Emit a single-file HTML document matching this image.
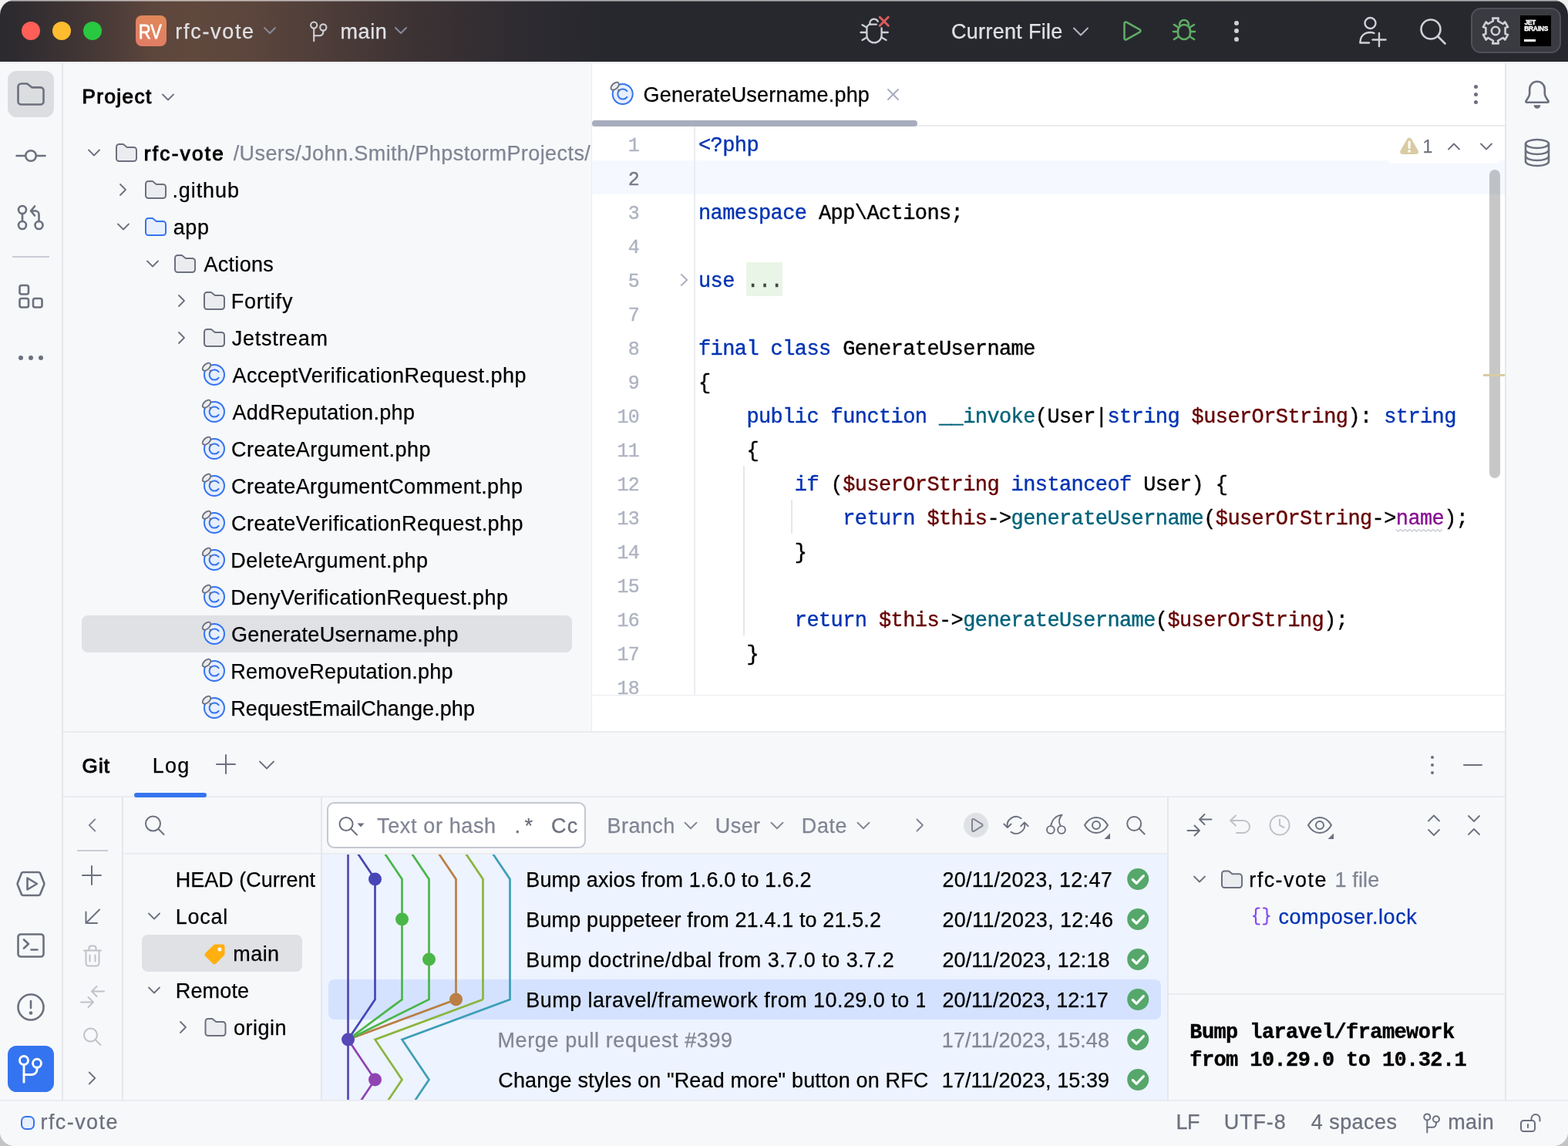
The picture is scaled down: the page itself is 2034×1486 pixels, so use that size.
<!DOCTYPE html>
<html lang="en"><head><meta charset="utf-8"><title>rfc-vote – GenerateUsername.php</title>
<style>
*{margin:0;padding:0;box-sizing:border-box}
html,body{width:2034px;height:1486px;background:#dadada}
body{background:linear-gradient(180deg,#f0f0f0,#c4c4c4)}
body{position:relative;font-family:"Liberation Sans",sans-serif}
#w{position:absolute;left:0;top:0;width:2034px;height:1486px;overflow:hidden;border-radius:19px;background:#f7f8fa;will-change:transform}
#w div,#w svg,#w span{position:absolute}
#w svg{overflow:visible}
#w span{white-space:pre;line-height:1}
.s{font-family:"Liberation Sans",sans-serif;-webkit-text-stroke:.25px currentColor}
.b{font-family:"Liberation Sans",sans-serif;font-weight:700}
.sb{font-family:"Liberation Sans",sans-serif;-webkit-text-stroke:1.05px currentColor}
.m{font-family:"Liberation Mono",monospace;-webkit-text-stroke:.4px currentColor}
</style></head>
<body><div id="w">
<div style="left:0px;top:80px;width:2034px;height:1406px;background:#f7f8fa;"></div>
<div style="left:768px;top:80px;width:1184px;height:869px;background:#ffffff;"></div>
<div style="left:0px;top:0px;width:2034px;height:80px;background:#27282e;background:linear-gradient(90deg,#2b2a2f 0px,#302c30 30px,#403534 100px,#4d3d39 150px,#5d463c 200px,#60483d 250px,#5b453c 330px,#4e3d39 420px,#3c3234 540px,#2f2c31 660px,#27282e 780px,#27282e 100%);"></div>
<div style="left:0px;top:0px;width:2034px;height:2px;background:linear-gradient(180deg,rgba(255,255,255,.75),rgba(255,255,255,.25));"></div>
<div style="left:28px;top:28px;width:24px;height:24px;background:#ff5f57;border-radius:12px;"></div>
<div style="left:68px;top:28px;width:24px;height:24px;background:#febc2e;border-radius:12px;"></div>
<div style="left:108px;top:28px;width:24px;height:24px;background:#28c840;border-radius:12px;"></div>
<div style="left:176px;top:20px;width:40px;height:40px;background:#e0855c;border-radius:8px;background:linear-gradient(200deg,#e08a58 0%,#e07a66 100%);"></div>
<span class="sb" style="left:180.45px;top:29px;font-size:25.5px;color:#fff;transform:scaleX(0.8500);transform-origin:0 0;-webkit-text-stroke:.8px #fff;">RV</span>
<span class="s" style="left:227.36px;top:28px;font-size:27px;color:#dfe1e5;letter-spacing:1.680px;">rfc-vote</span>
<svg style="left:342px;top:34px;" width="16" height="12" viewBox="0 0 16 12"><path d="M1 2 L8 9 L15 2" fill="none" stroke="#868a99" stroke-width="2" stroke-linecap="round" stroke-linejoin="round"/></svg>
<svg style="left:0px;top:0px;" width="2034" height="1486" viewBox="0 0 2034 1486"><g fill="none" stroke="#ced0d6" stroke-width="2.100" stroke-linecap="round"><circle cx="407.200" cy="32.600" r="4.100"/><circle cx="419.300" cy="35.500" r="4.100"/><path d="M407.200 36.900v16.300"/><path d="M419.300 39.700v1.800a4.800 4.800 0 0 1-4.800 4.800h-7.300"/></g></svg>
<span class="s" style="left:441.56px;top:28px;font-size:27px;color:#dfe1e5;letter-spacing:0.572px;">main</span>
<svg style="left:512px;top:34px;" width="16" height="12" viewBox="0 0 16 12"><path d="M1 2 L8 9 L15 2" fill="none" stroke="#868a99" stroke-width="2" stroke-linecap="round" stroke-linejoin="round"/></svg>
<svg style="left:0px;top:0px;" width="2034" height="1486" viewBox="0 0 2034 1486"><g fill="none" stroke="#ced0d6" stroke-width="2.300" stroke-linecap="round" stroke-linejoin="round"><path d="M1128.400 31a5.500 5.500 0 0 1 10.400-3.200"/><path d="M1129.500 31.600h7.500"/><path d="M1129.500 31.600c-3.300 0-5.100 2.400-5.100 5.400v8.800a9.600 9.600 0 0 0 19.200 0v-9.300"/><path d="M1118.500 32.200l5.600 3.300M1116.500 42h7.700M1118.500 52l5.900-3.500M1144 42h7.800M1143.700 48.500l5.900 3.500"/></g><path d="M1141.300 22.300l11 11M1152.300 22.300l-11 11" stroke="#db5c5c" stroke-width="3" stroke-linecap="round"/></svg>
<span class="s" style="left:1233.98px;top:28px;font-size:27px;color:#dfe1e5;letter-spacing:0.302px;">Current File</span>
<svg style="left:1392px;top:35px;" width="20" height="12" viewBox="0 0 20 12"><path d="M1 1.500 L10 10.500 L19 1.500" fill="none" stroke="#b4b8bf" stroke-width="2" stroke-linecap="round" stroke-linejoin="round"/></svg>
<svg style="left:1456px;top:26px;" width="26" height="28" viewBox="0 0 26 28"><path d="M2.500 4.500c0-1.600 1.700-2.500 3-1.700l17 9.500c1.300.8 1.300 2.600 0 3.400l-17 9.500c-1.300.8-3-.1-3-1.700z" fill="none" stroke="#5fad65" stroke-width="2.600" stroke-linejoin="round"/></svg>
<svg style="left:1520px;top:24px;" width="32" height="30" viewBox="0 0 32 30"><g fill="none" stroke="#5fad65" stroke-width="2.600" stroke-linecap="round"><path d="M10 8a6 6 0 0 1 12 0"/><rect x="8" y="8" width="16" height="19" rx="8"/><path d="M2 17h6M24 17h6M3 8l5.500 3.500M29 8l-5.500 3.500M3 27l5.500-3.500M29 27l-5.500-3.500"/></g></svg>
<div style="left:1601px;top:26.5px;width:6px;height:6px;background:#ced0d6;border-radius:3px;"></div>
<div style="left:1601px;top:37px;width:6px;height:6px;background:#ced0d6;border-radius:3px;"></div>
<div style="left:1601px;top:47.5px;width:6px;height:6px;background:#ced0d6;border-radius:3px;"></div>
<svg style="left:1762px;top:21px;" width="38" height="40" viewBox="0 0 38 40"><g fill="none" stroke="#ced0d6" stroke-width="2.400" stroke-linecap="round"><circle cx="15.500" cy="9" r="7"/><path d="M2.500 34c0-8 5-13 13-13c2 0 3.500.4 5 1"/><path d="M27 22v17M18.500 30.500h17"/><path d="M2.500 34.500h11.500"/></g></svg>
<svg style="left:1841px;top:23px;" width="36" height="36" viewBox="0 0 36 36"><g fill="none" stroke="#ced0d6" stroke-width="2.600" stroke-linecap="round"><circle cx="15" cy="15" r="12.500"/><path d="M24 24l9.500 9.500"/></g></svg>
<div style="left:1908px;top:10px;width:117px;height:59px;background:#393b40;border-radius:13px;border:2px solid #4e5157;"></div>
<svg style="left:0px;top:0px;" width="2034" height="1486" viewBox="0 0 2034 1486"><g fill="none" stroke="#ced0d6" stroke-width="2.600" stroke-linejoin="round"><path d="M1936.2 23.6L1943.8 23.6L1943.0 27.1L1949.7 31.0L1952.3 28.5L1956.1 35.1L1952.6 36.1L1952.6 43.9L1956.1 44.9L1952.3 51.5L1949.7 49.0L1943.0 52.9L1943.8 56.4L1936.2 56.4L1937.0 52.9L1930.3 49.0L1927.7 51.5L1923.9 44.9L1927.4 43.9L1927.4 36.1L1923.9 35.1L1927.7 28.5L1930.3 31.0L1937.0 27.1z"/><circle cx="1940" cy="40" r="5.200"/></g></svg>
<div style="left:1972px;top:20px;width:40px;height:40px;background:#000;"></div>
<span class="b" style="left:1977.57px;top:25px;font-size:8.5px;color:#fff;letter-spacing:-0.487px;-webkit-text-stroke:.35px #fff;">JET</span>
<span class="b" style="left:1977.13px;top:33px;font-size:8.5px;color:#fff;letter-spacing:-0.279px;-webkit-text-stroke:.35px #fff;">BRAINS</span>
<div style="left:1977px;top:51.3px;width:15px;height:3px;background:#fff;"></div>
<div style="left:80.3px;top:80px;width:1.5px;height:1347px;background:#e6e7eb;"></div>
<div style="left:10px;top:92px;width:60px;height:60px;background:#dcdde1;border-radius:11.5px;"></div>
<svg style="left:0px;top:0px;" width="2034" height="1486" viewBox="0 0 2034 1486"><path d="M23.5 112.5a4 4 0 0 1 4 -4h7.700000000000001l6.07 4.86H52.5a4 4 0 0 1 4 4V131.5a4 4 0 0 1 -4 4H27.5a4 4 0 0 1 -4 -4z" fill="none" stroke="#6c707e" stroke-width="2.6" stroke-linejoin="round"/></svg>
<svg style="left:0px;top:0px;" width="2034" height="1486" viewBox="0 0 2034 1486"><g fill="none" stroke="#6c707e" stroke-width="2.600" stroke-linecap="round"><circle cx="40" cy="202" r="6.800"/><path d="M21.500 202h11.500M47 202h11.500"/></g></svg>
<svg style="left:0px;top:0px;" width="2034" height="1486" viewBox="0 0 2034 1486"><g fill="none" stroke="#6c707e" stroke-width="2.600" stroke-linecap="round" stroke-linejoin="round"><circle cx="29" cy="272" r="5"/><circle cx="29" cy="292" r="5"/><circle cx="50.500" cy="292" r="5"/><path d="M29 277v10"/><path d="M40.500 273.500h5.500a4.500 4.500 0 0 1 4.500 4.500v9"/><path d="M45 267.500l-5 6l5 6"/></g></svg>
<div style="left:16px;top:332px;width:48px;height:2px;background:#c9ccd6;"></div>
<svg style="left:0px;top:0px;" width="2034" height="1486" viewBox="0 0 2034 1486"><g fill="none" stroke="#6c707e" stroke-width="2.600" stroke-linejoin="round"><rect x="25.500" y="370" width="11.500" height="11.500" rx="2.500"/><rect x="25.500" y="387" width="11.500" height="11.500" rx="2.500"/><rect x="43" y="387" width="11.500" height="11.500" rx="2.500"/></g></svg>
<div style="left:24.2px;top:461px;width:5.6px;height:5.6px;background:#6c707e;border-radius:3px;"></div>
<div style="left:37.2px;top:461px;width:5.6px;height:5.6px;background:#6c707e;border-radius:3px;"></div>
<div style="left:50.2px;top:461px;width:5.6px;height:5.6px;background:#6c707e;border-radius:3px;"></div>
<svg style="left:0px;top:0px;" width="2034" height="1486" viewBox="0 0 2034 1486"><g fill="none" stroke="#6c707e" stroke-width="2.600" stroke-linejoin="round"><path d="M30 1131h20a2.500 2.500 0 0 1 2.100 1.200l5 12.600a2.500 2.500 0 0 1 0 2.400l-5 12.600a2.500 2.500 0 0 1-2.100 1.200h-20a2.500 2.500 0 0 1-2.100-1.200l-5-12.600a2.500 2.500 0 0 1 0-2.400l5-12.600a2.500 2.500 0 0 1 2.100-1.200z"/><path d="M35.500 1138.500v15l12.500-7.500z"/></g></svg>
<svg style="left:0px;top:0px;" width="2034" height="1486" viewBox="0 0 2034 1486"><g fill="none" stroke="#6c707e" stroke-width="2.600" stroke-linecap="round" stroke-linejoin="round"><rect x="23.500" y="1211.500" width="33" height="29" rx="3.500"/><path d="M31 1218.500l6 5.500l-6 5.500M40.500 1231.500h8"/></g></svg>
<svg style="left:0px;top:0px;" width="2034" height="1486" viewBox="0 0 2034 1486"><g fill="none" stroke="#6c707e" stroke-width="2.600" stroke-linecap="round"><circle cx="40" cy="1306" r="16.500"/><path d="M40 1298v9"/></g><circle cx="40" cy="1313.500" r="2.300" fill="#6c707e"/></svg>
<div style="left:10px;top:1356px;width:60px;height:60px;background:#3574f0;border-radius:11.5px;"></div>
<svg style="left:0px;top:0px;" width="2034" height="1486" viewBox="0 0 2034 1486"><g fill="none" stroke="#fff" stroke-width="2.900" stroke-linecap="round"><circle cx="31" cy="1375" r="5.500"/><circle cx="48" cy="1378.800" r="5.500"/><path d="M31 1380.800v22.400"/><path d="M48 1384.500v2.500a6.500 6.500 0 0 1-6.500 6.500h-10.500"/></g></svg>
<div style="left:1952.2px;top:80px;width:1.5px;height:1347px;background:#e6e7eb;"></div>
<svg style="left:0px;top:0px;" width="2034" height="1486" viewBox="0 0 2034 1486"><path d="M1984.200 115.500a9.800 9.800 0 0 1 19.600 0v6c0 3 2 5.400 4.700 9.500a1.100 1.100 0 0 1-.9 1.700h-27.200a1.100 1.100 0 0 1-.9-1.700c2.700-4.100 4.700-6.500 4.700-9.500z" fill="none" stroke="#6c707e" stroke-width="2.600" stroke-linejoin="round"/><path d="M1989.600 136.300h8.800a4.400 4.400 0 0 1-8.800 0z" fill="#6c707e"/></svg>
<svg style="left:0px;top:0px;" width="2034" height="1486" viewBox="0 0 2034 1486"><g fill="none" stroke="#6c707e" stroke-width="2.600"><ellipse cx="1994" cy="186.500" rx="15" ry="5.500"/><path d="M1979 186.500v23c0 3 6.700 5.500 15 5.500s15-2.500 15-5.500v-23"/><path d="M1979 194.500c0 3 6.700 5.500 15 5.500s15-2.500 15-5.500M1979 202.500c0 3 6.700 5.500 15 5.500s15-2.500 15-5.500"/></g></svg>
<div style="left:767px;top:80px;width:1px;height:869px;background:#ebecf0;"></div>
<span class="sb" style="left:106.57px;top:112px;font-size:26px;letter-spacing:1.450px;">Project</span>
<svg style="left:0px;top:0px;" width="2034" height="1486" viewBox="0 0 2034 1486"><path d="M211.0 122.5L218 129.5L225.0 122.5" fill="none" stroke="#6c707e" stroke-width="1.8" stroke-linecap="round" stroke-linejoin="round"/></svg>
<div style="left:106px;top:798px;width:636px;height:48px;background:#dfe1e5;border-radius:8px;"></div>
<svg style="left:0px;top:0px;" width="2034" height="1486" viewBox="0 0 2034 1486"><path d="M115.0 194.5L122 201.5L129.0 194.5" fill="none" stroke="#6c707e" stroke-width="1.8" stroke-linecap="round" stroke-linejoin="round"/></svg>
<svg style="left:0px;top:0px;" width="2034" height="1486" viewBox="0 0 2034 1486"><path d="M151 190.5a3.5 3.5 0 0 1 3.5 -3.5h5.4l4.95 3.96H173.5a3.5 3.5 0 0 1 3.5 3.5V205.5a3.5 3.5 0 0 1 -3.5 3.5H154.5a3.5 3.5 0 0 1 -3.5 -3.5z" fill="#ebecf0" stroke="#6c707e" stroke-width="2" stroke-linejoin="round"/></svg>
<span class="sb" style="left:186.87px;top:186px;font-size:26px;letter-spacing:2.313px;">rfc-vote</span>
<svg style="left:0px;top:0px;" width="2034" height="1486" viewBox="0 0 2034 1486"><path d="M156.0 239.0L163.0 246L156.0 253.0" fill="none" stroke="#6c707e" stroke-width="1.8" stroke-linecap="round" stroke-linejoin="round"/></svg>
<svg style="left:0px;top:0px;" width="2034" height="1486" viewBox="0 0 2034 1486"><path d="M189 238.5a3.5 3.5 0 0 1 3.5 -3.5h5.4l4.95 3.96H211.5a3.5 3.5 0 0 1 3.5 3.5V253.5a3.5 3.5 0 0 1 -3.5 3.5H192.5a3.5 3.5 0 0 1 -3.5 -3.5z" fill="#ebecf0" stroke="#6c707e" stroke-width="2" stroke-linejoin="round"/></svg>
<span class="s" style="left:223.48px;top:234px;font-size:27px;letter-spacing:0.903px;">.github</span>
<svg style="left:0px;top:0px;" width="2034" height="1486" viewBox="0 0 2034 1486"><path d="M153.0 290.5L160 297.5L167.0 290.5" fill="none" stroke="#6c707e" stroke-width="1.8" stroke-linecap="round" stroke-linejoin="round"/></svg>
<svg style="left:0px;top:0px;" width="2034" height="1486" viewBox="0 0 2034 1486"><path d="M189 286.5a3.5 3.5 0 0 1 3.5 -3.5h5.4l4.95 3.96H211.5a3.5 3.5 0 0 1 3.5 3.5V301.5a3.5 3.5 0 0 1 -3.5 3.5H192.5a3.5 3.5 0 0 1 -3.5 -3.5z" fill="#e7effd" stroke="#3574f0" stroke-width="2" stroke-linejoin="round"/></svg>
<span class="s" style="left:224.80px;top:282px;font-size:27px;letter-spacing:0.559px;">app</span>
<svg style="left:0px;top:0px;" width="2034" height="1486" viewBox="0 0 2034 1486"><path d="M191.0 338.5L198 345.5L205.0 338.5" fill="none" stroke="#6c707e" stroke-width="1.8" stroke-linecap="round" stroke-linejoin="round"/></svg>
<svg style="left:0px;top:0px;" width="2034" height="1486" viewBox="0 0 2034 1486"><path d="M227 334.5a3.5 3.5 0 0 1 3.5 -3.5h5.4l4.95 3.96H249.5a3.5 3.5 0 0 1 3.5 3.5V349.5a3.5 3.5 0 0 1 -3.5 3.5H230.5a3.5 3.5 0 0 1 -3.5 -3.5z" fill="#ebecf0" stroke="#6c707e" stroke-width="2" stroke-linejoin="round"/></svg>
<span class="s" style="left:264.40px;top:330px;font-size:27px;letter-spacing:0.314px;">Actions</span>
<svg style="left:0px;top:0px;" width="2034" height="1486" viewBox="0 0 2034 1486"><path d="M232.0 383.0L239.0 390L232.0 397.0" fill="none" stroke="#6c707e" stroke-width="1.8" stroke-linecap="round" stroke-linejoin="round"/></svg>
<svg style="left:0px;top:0px;" width="2034" height="1486" viewBox="0 0 2034 1486"><path d="M265 382.5a3.5 3.5 0 0 1 3.5 -3.5h5.4l4.95 3.96H287.5a3.5 3.5 0 0 1 3.5 3.5V397.5a3.5 3.5 0 0 1 -3.5 3.5H268.5a3.5 3.5 0 0 1 -3.5 -3.5z" fill="#ebecf0" stroke="#6c707e" stroke-width="2" stroke-linejoin="round"/></svg>
<span class="s" style="left:299.74px;top:378px;font-size:27px;letter-spacing:0.775px;">Fortify</span>
<svg style="left:0px;top:0px;" width="2034" height="1486" viewBox="0 0 2034 1486"><path d="M232.0 431.0L239.0 438L232.0 445.0" fill="none" stroke="#6c707e" stroke-width="1.8" stroke-linecap="round" stroke-linejoin="round"/></svg>
<svg style="left:0px;top:0px;" width="2034" height="1486" viewBox="0 0 2034 1486"><path d="M265 430.5a3.5 3.5 0 0 1 3.5 -3.5h5.4l4.95 3.96H287.5a3.5 3.5 0 0 1 3.5 3.5V445.5a3.5 3.5 0 0 1 -3.5 3.5H268.5a3.5 3.5 0 0 1 -3.5 -3.5z" fill="#ebecf0" stroke="#6c707e" stroke-width="2" stroke-linejoin="round"/></svg>
<span class="s" style="left:300.73px;top:426px;font-size:27px;letter-spacing:0.732px;">Jetstream</span>
<svg style="left:0px;top:0px;" width="2034" height="1486" viewBox="0 0 2034 1486"><circle cx="278" cy="486" r="13" fill="#e7effd" stroke="#3574f0" stroke-width="2"/><path d="M283.6 482.2a6.6 6.6 0 1 0 0 7.6" fill="none" stroke="#3574f0" stroke-width="2" stroke-linecap="round"/><path d="M271.5 479.5l4.200 .8l-3.400 3.400z" fill="#6c707e"/><ellipse cx="268" cy="475.7" rx="6.3" ry="3.600" transform="rotate(-42 268 475.7)" fill="#ebecf0" stroke="#6c707e" stroke-width="1.800"/></svg>
<span class="s" style="left:301.40px;top:474px;font-size:27px;letter-spacing:0.477px;">AcceptVerificationRequest.php</span>
<svg style="left:0px;top:0px;" width="2034" height="1486" viewBox="0 0 2034 1486"><circle cx="278" cy="534" r="13" fill="#e7effd" stroke="#3574f0" stroke-width="2"/><path d="M283.6 530.2a6.6 6.6 0 1 0 0 7.6" fill="none" stroke="#3574f0" stroke-width="2" stroke-linecap="round"/><path d="M271.5 527.5l4.200 .8l-3.400 3.400z" fill="#6c707e"/><ellipse cx="268" cy="523.7" rx="6.3" ry="3.600" transform="rotate(-42 268 523.7)" fill="#ebecf0" stroke="#6c707e" stroke-width="1.800"/></svg>
<span class="s" style="left:301.40px;top:522px;font-size:27px;letter-spacing:0.337px;">AddReputation.php</span>
<svg style="left:0px;top:0px;" width="2034" height="1486" viewBox="0 0 2034 1486"><circle cx="278" cy="582" r="13" fill="#e7effd" stroke="#3574f0" stroke-width="2"/><path d="M283.6 578.2a6.6 6.6 0 1 0 0 7.6" fill="none" stroke="#3574f0" stroke-width="2" stroke-linecap="round"/><path d="M271.5 575.5l4.200 .8l-3.400 3.400z" fill="#6c707e"/><ellipse cx="268" cy="571.7" rx="6.3" ry="3.600" transform="rotate(-42 268 571.7)" fill="#ebecf0" stroke="#6c707e" stroke-width="1.800"/></svg>
<span class="s" style="left:300.08px;top:570px;font-size:27px;letter-spacing:0.456px;">CreateArgument.php</span>
<svg style="left:0px;top:0px;" width="2034" height="1486" viewBox="0 0 2034 1486"><circle cx="278" cy="630" r="13" fill="#e7effd" stroke="#3574f0" stroke-width="2"/><path d="M283.6 626.2a6.6 6.6 0 1 0 0 7.6" fill="none" stroke="#3574f0" stroke-width="2" stroke-linecap="round"/><path d="M271.5 623.5l4.200 .8l-3.400 3.400z" fill="#6c707e"/><ellipse cx="268" cy="619.7" rx="6.3" ry="3.600" transform="rotate(-42 268 619.7)" fill="#ebecf0" stroke="#6c707e" stroke-width="1.800"/></svg>
<span class="s" style="left:300.08px;top:618px;font-size:27px;letter-spacing:0.426px;">CreateArgumentComment.php</span>
<svg style="left:0px;top:0px;" width="2034" height="1486" viewBox="0 0 2034 1486"><circle cx="278" cy="678" r="13" fill="#e7effd" stroke="#3574f0" stroke-width="2"/><path d="M283.6 674.2a6.6 6.6 0 1 0 0 7.6" fill="none" stroke="#3574f0" stroke-width="2" stroke-linecap="round"/><path d="M271.5 671.5l4.200 .8l-3.400 3.400z" fill="#6c707e"/><ellipse cx="268" cy="667.7" rx="6.3" ry="3.600" transform="rotate(-42 268 667.7)" fill="#ebecf0" stroke="#6c707e" stroke-width="1.800"/></svg>
<span class="s" style="left:300.08px;top:666px;font-size:27px;letter-spacing:0.435px;">CreateVerificationRequest.php</span>
<svg style="left:0px;top:0px;" width="2034" height="1486" viewBox="0 0 2034 1486"><circle cx="278" cy="726" r="13" fill="#e7effd" stroke="#3574f0" stroke-width="2"/><path d="M283.6 722.2a6.6 6.6 0 1 0 0 7.6" fill="none" stroke="#3574f0" stroke-width="2" stroke-linecap="round"/><path d="M271.5 719.5l4.200 .8l-3.400 3.400z" fill="#6c707e"/><ellipse cx="268" cy="715.7" rx="6.3" ry="3.600" transform="rotate(-42 268 715.7)" fill="#ebecf0" stroke="#6c707e" stroke-width="1.800"/></svg>
<span class="s" style="left:299.24px;top:714px;font-size:27px;letter-spacing:0.476px;">DeleteArgument.php</span>
<svg style="left:0px;top:0px;" width="2034" height="1486" viewBox="0 0 2034 1486"><circle cx="278" cy="774" r="13" fill="#e7effd" stroke="#3574f0" stroke-width="2"/><path d="M283.6 770.2a6.6 6.6 0 1 0 0 7.6" fill="none" stroke="#3574f0" stroke-width="2" stroke-linecap="round"/><path d="M271.5 767.5l4.200 .8l-3.400 3.400z" fill="#6c707e"/><ellipse cx="268" cy="763.7" rx="6.3" ry="3.600" transform="rotate(-42 268 763.7)" fill="#ebecf0" stroke="#6c707e" stroke-width="1.800"/></svg>
<span class="s" style="left:299.24px;top:762px;font-size:27px;letter-spacing:0.443px;">DenyVerificationRequest.php</span>
<svg style="left:0px;top:0px;" width="2034" height="1486" viewBox="0 0 2034 1486"><circle cx="278" cy="822" r="13" fill="#e7effd" stroke="#3574f0" stroke-width="2"/><path d="M283.6 818.2a6.6 6.6 0 1 0 0 7.6" fill="none" stroke="#3574f0" stroke-width="2" stroke-linecap="round"/><path d="M271.5 815.5l4.200 .8l-3.400 3.400z" fill="#6c707e"/><ellipse cx="268" cy="811.7" rx="6.3" ry="3.600" transform="rotate(-42 268 811.7)" fill="#ebecf0" stroke="#6c707e" stroke-width="1.800"/></svg>
<span class="s" style="left:300.09px;top:810px;font-size:27px;letter-spacing:0.248px;">GenerateUsername.php</span>
<svg style="left:0px;top:0px;" width="2034" height="1486" viewBox="0 0 2034 1486"><circle cx="278" cy="870" r="13" fill="#e7effd" stroke="#3574f0" stroke-width="2"/><path d="M283.6 866.2a6.6 6.6 0 1 0 0 7.6" fill="none" stroke="#3574f0" stroke-width="2" stroke-linecap="round"/><path d="M271.5 863.5l4.200 .8l-3.400 3.400z" fill="#6c707e"/><ellipse cx="268" cy="859.7" rx="6.3" ry="3.600" transform="rotate(-42 268 859.7)" fill="#ebecf0" stroke="#6c707e" stroke-width="1.800"/></svg>
<span class="s" style="left:299.24px;top:858px;font-size:27px;letter-spacing:0.240px;">RemoveReputation.php</span>
<svg style="left:0px;top:0px;" width="2034" height="1486" viewBox="0 0 2034 1486"><circle cx="278" cy="918" r="13" fill="#e7effd" stroke="#3574f0" stroke-width="2"/><path d="M283.6 914.2a6.6 6.6 0 1 0 0 7.6" fill="none" stroke="#3574f0" stroke-width="2" stroke-linecap="round"/><path d="M271.5 911.5l4.200 .8l-3.400 3.400z" fill="#6c707e"/><ellipse cx="268" cy="907.7" rx="6.3" ry="3.600" transform="rotate(-42 268 907.7)" fill="#ebecf0" stroke="#6c707e" stroke-width="1.800"/></svg>
<span class="s" style="left:299.24px;top:906px;font-size:27px;letter-spacing:0.073px;">RequestEmailChange.php</span>
<span class="s" style="left:302.65px;top:186px;font-size:27px;color:#818594;letter-spacing:0.428px;max-width:464.5px;overflow:hidden;">/Users/John.Smith/PhpstormProjects/</span>
<div style="left:0px;top:80px;width:2034px;height:1.5px;background:#ebecf0;"></div>
<div style="left:768px;top:208px;width:1184px;height:44px;background:#f5f8fe;"></div>
<svg style="left:0px;top:0px;" width="2034" height="1486" viewBox="0 0 2034 1486"><circle cx="807.7" cy="122" r="13" fill="#e7effd" stroke="#3574f0" stroke-width="2"/><path d="M813.3000000000001 118.2a6.6 6.6 0 1 0 0 7.6" fill="none" stroke="#3574f0" stroke-width="2" stroke-linecap="round"/><path d="M801.2 115.5l4.200 .8l-3.400 3.400z" fill="#6c707e"/><ellipse cx="797.7" cy="111.7" rx="6.3" ry="3.600" transform="rotate(-42 797.7 111.7)" fill="#ebecf0" stroke="#6c707e" stroke-width="1.800"/></svg>
<span class="s" style="left:834.59px;top:110px;font-size:27px;letter-spacing:0.191px;">GenerateUsername.php</span>
<svg style="left:0px;top:0px;" width="2034" height="1486" viewBox="0 0 2034 1486"><path d="M1152 116l13 13M1165 116l-13 13" stroke="#a8adbd" stroke-width="2" stroke-linecap="round"/></svg>
<div style="left:1911.5px;top:109.5px;width:5px;height:5px;background:#6c707e;border-radius:3px;"></div>
<div style="left:1911.5px;top:119.5px;width:5px;height:5px;background:#6c707e;border-radius:3px;"></div>
<div style="left:1911.5px;top:129.5px;width:5px;height:5px;background:#6c707e;border-radius:3px;"></div>
<div style="left:768px;top:162px;width:1184px;height:1.5px;background:#ebecf0;"></div>
<div style="left:768px;top:156px;width:422px;height:7.5px;background:#a8adbd;border-radius:4px;"></div>
<div style="left:767px;top:80px;width:1px;height:869px;background:#ebecf0;"></div>
<div style="left:900.3px;top:164px;width:1.5px;height:737px;background:#ebecf0;"></div>
<div style="left:768px;top:900.5px;width:1184px;height:1.5px;background:#ebecf0;"></div>
<div style="left:964.4px;top:604px;width:1.5px;height:220px;background:#e6e7eb;"></div>
<div style="left:1026.2px;top:648px;width:1.5px;height:44px;background:#e6e7eb;"></div>
<div style="left:968.4px;top:340px;width:46.8px;height:44px;background:#e9f5e6;"></div>
<svg style="left:0px;top:0px;" width="2034" height="1486" viewBox="0 0 2034 1486"><path d="M883.75 356.0L891.25 363L883.75 370.0" fill="none" stroke="#a8adbd" stroke-width="1.8" stroke-linecap="round" stroke-linejoin="round"/></svg>
<span class="m" style="left:814.85px;top:177px;font-size:24.9px;color:#aeb3c2;letter-spacing:-0.488px;">1</span>
<span class="m" style="left:814.85px;top:221px;font-size:24.9px;color:#767a8a;letter-spacing:-0.488px;">2</span>
<span class="m" style="left:814.85px;top:265px;font-size:24.9px;color:#aeb3c2;letter-spacing:-0.488px;">3</span>
<span class="m" style="left:814.85px;top:309px;font-size:24.9px;color:#aeb3c2;letter-spacing:-0.488px;">4</span>
<span class="m" style="left:814.85px;top:353px;font-size:24.9px;color:#aeb3c2;letter-spacing:-0.488px;">5</span>
<span class="m" style="left:814.85px;top:397px;font-size:24.9px;color:#aeb3c2;letter-spacing:-0.488px;">7</span>
<span class="m" style="left:814.85px;top:441px;font-size:24.9px;color:#aeb3c2;letter-spacing:-0.488px;">8</span>
<span class="m" style="left:814.85px;top:485px;font-size:24.9px;color:#aeb3c2;letter-spacing:-0.488px;">9</span>
<span class="m" style="left:800.40px;top:529px;font-size:24.9px;color:#aeb3c2;letter-spacing:-0.488px;">10</span>
<span class="m" style="left:800.40px;top:573px;font-size:24.9px;color:#aeb3c2;letter-spacing:-0.488px;">11</span>
<span class="m" style="left:800.40px;top:617px;font-size:24.9px;color:#aeb3c2;letter-spacing:-0.488px;">12</span>
<span class="m" style="left:800.40px;top:661px;font-size:24.9px;color:#aeb3c2;letter-spacing:-0.488px;">13</span>
<span class="m" style="left:800.40px;top:705px;font-size:24.9px;color:#aeb3c2;letter-spacing:-0.488px;">14</span>
<span class="m" style="left:800.40px;top:749px;font-size:24.9px;color:#aeb3c2;letter-spacing:-0.488px;">15</span>
<span class="m" style="left:800.40px;top:793px;font-size:24.9px;color:#aeb3c2;letter-spacing:-0.488px;">16</span>
<span class="m" style="left:800.40px;top:837px;font-size:24.9px;color:#aeb3c2;letter-spacing:-0.488px;">17</span>
<span class="m" style="left:800.40px;top:881px;font-size:24.9px;color:#aeb3c2;letter-spacing:-0.488px;clip-path:inset(0 0 3px 0);">18</span>
<span class="m" style="left:906.00px;top:176px;font-size:27.0px;color:#0033b3;letter-spacing:-0.603px;">&lt;?php</span>
<span class="m" style="left:906.00px;top:264px;font-size:27.0px;color:#0033b3;letter-spacing:-0.603px;">namespace</span>
<span class="m" style="left:1062.00px;top:264px;font-size:27.0px;letter-spacing:-0.603px;">App\Actions;</span>
<span class="m" style="left:906.00px;top:352px;font-size:27.0px;color:#0033b3;letter-spacing:-0.603px;">use</span>
<span class="m" style="left:968.40px;top:352px;font-size:27.0px;color:#3d4a3a;letter-spacing:-0.603px;">...</span>
<span class="m" style="left:906.00px;top:440px;font-size:27.0px;color:#0033b3;letter-spacing:-0.603px;">final class</span>
<span class="m" style="left:1093.20px;top:440px;font-size:27.0px;letter-spacing:-0.603px;">GenerateUsername</span>
<span class="m" style="left:906.00px;top:484px;font-size:27.0px;letter-spacing:-0.603px;">{</span>
<span class="m" style="left:968.40px;top:528px;font-size:27.0px;color:#0033b3;letter-spacing:-0.603px;">public function </span>
<span class="m" style="left:1218.00px;top:528px;font-size:27.0px;color:#00627a;letter-spacing:-0.603px;">__invoke</span>
<span class="m" style="left:1342.80px;top:528px;font-size:27.0px;letter-spacing:-0.603px;">(User|</span>
<span class="m" style="left:1436.40px;top:528px;font-size:27.0px;color:#0033b3;letter-spacing:-0.603px;">string</span>
<span class="m" style="left:1545.60px;top:528px;font-size:27.0px;color:#660000;letter-spacing:-0.603px;">$userOrString</span>
<span class="m" style="left:1748.40px;top:528px;font-size:27.0px;letter-spacing:-0.603px;">): </span>
<span class="m" style="left:1795.20px;top:528px;font-size:27.0px;color:#0033b3;letter-spacing:-0.603px;">string</span>
<span class="m" style="left:968.40px;top:572px;font-size:27.0px;letter-spacing:-0.603px;">{</span>
<span class="m" style="left:1030.80px;top:616px;font-size:27.0px;color:#0033b3;letter-spacing:-0.603px;">if</span>
<span class="m" style="left:1077.60px;top:616px;font-size:27.0px;letter-spacing:-0.603px;">(</span>
<span class="m" style="left:1093.20px;top:616px;font-size:27.0px;color:#660000;letter-spacing:-0.603px;">$userOrString</span>
<span class="m" style="left:1311.60px;top:616px;font-size:27.0px;color:#0033b3;letter-spacing:-0.603px;">instanceof</span>
<span class="m" style="left:1483.20px;top:616px;font-size:27.0px;letter-spacing:-0.603px;">User) {</span>
<span class="m" style="left:1093.20px;top:660px;font-size:27.0px;color:#0033b3;letter-spacing:-0.603px;">return</span>
<span class="m" style="left:1202.40px;top:660px;font-size:27.0px;color:#660000;letter-spacing:-0.603px;">$this</span>
<span class="m" style="left:1280.40px;top:660px;font-size:27.0px;letter-spacing:-0.603px;">-&gt;</span>
<span class="m" style="left:1311.60px;top:660px;font-size:27.0px;color:#00627a;letter-spacing:-0.603px;">generateUsername</span>
<span class="m" style="left:1561.20px;top:660px;font-size:27.0px;letter-spacing:-0.603px;">(</span>
<span class="m" style="left:1576.80px;top:660px;font-size:27.0px;color:#660000;letter-spacing:-0.603px;">$userOrString</span>
<span class="m" style="left:1779.60px;top:660px;font-size:27.0px;letter-spacing:-0.603px;">-&gt;</span>
<span class="m" style="left:1810.80px;top:660px;font-size:27.0px;color:#871094;letter-spacing:-0.603px;">name</span>
<span class="m" style="left:1873.20px;top:660px;font-size:27.0px;letter-spacing:-0.603px;">);</span>
<span class="m" style="left:1030.80px;top:704px;font-size:27.0px;letter-spacing:-0.603px;">}</span>
<span class="m" style="left:1030.80px;top:792px;font-size:27.0px;color:#0033b3;letter-spacing:-0.603px;">return</span>
<span class="m" style="left:1140.00px;top:792px;font-size:27.0px;color:#660000;letter-spacing:-0.603px;">$this</span>
<span class="m" style="left:1218.00px;top:792px;font-size:27.0px;letter-spacing:-0.603px;">-&gt;</span>
<span class="m" style="left:1249.20px;top:792px;font-size:27.0px;color:#00627a;letter-spacing:-0.603px;">generateUsername</span>
<span class="m" style="left:1498.80px;top:792px;font-size:27.0px;letter-spacing:-0.603px;">(</span>
<span class="m" style="left:1514.40px;top:792px;font-size:27.0px;color:#660000;letter-spacing:-0.603px;">$userOrString</span>
<span class="m" style="left:1717.20px;top:792px;font-size:27.0px;letter-spacing:-0.603px;">);</span>
<span class="m" style="left:968.40px;top:836px;font-size:27.0px;letter-spacing:-0.603px;">}</span>
<svg style="left:0px;top:0px;" width="2034" height="1486" viewBox="0 0 2034 1486"><path d="M1810.8 686.5l3 2.5l3 -2.5l3 2.5l3 -2.5l3 2.5l3 -2.5l3 2.5l3 -2.5l3 2.5l3 -2.5l3 2.5l3 -2.5l3 2.5l3 -2.5l3 2.5l3 -2.5l3 2.5l3 -2.5l3 2.5l3 -2.5" fill="none" stroke="#c9ccd6" stroke-width="1.500"/></svg>
<div style="left:1799px;top:164px;width:148px;height:48px;background:#fff;border-radius:8px;"></div>
<svg style="left:0px;top:0px;" width="2034" height="1486" viewBox="0 0 2034 1486"><path d="M1825.300 180.200a3.200 3.200 0 0 1 5.600 0l8.700 15a3.200 3.200 0 0 1-2.800 4.800h-17.400a3.200 3.200 0 0 1-2.800-4.800z" fill="#d9cba3"/><path d="M1828.100 184v7.500" stroke="#fff" stroke-width="3" stroke-linecap="round"/><circle cx="1828.100" cy="196" r="1.800" fill="#fff"/></svg>
<span class="s" style="left:1845.40px;top:179px;font-size:23px;color:#6c707e;">1</span>
<svg style="left:0px;top:0px;" width="2034" height="1486" viewBox="0 0 2034 1486"><path d="M1879.0 193.5L1886 186.5L1893.0 193.5" fill="none" stroke="#6c707e" stroke-width="1.8" stroke-linecap="round" stroke-linejoin="round"/></svg>
<svg style="left:0px;top:0px;" width="2034" height="1486" viewBox="0 0 2034 1486"><path d="M1921.0 186.5L1928 193.5L1935.0 186.5" fill="none" stroke="#6c707e" stroke-width="1.8" stroke-linecap="round" stroke-linejoin="round"/></svg>
<div style="left:1932px;top:220px;width:14px;height:400px;background:rgba(0,0,0,.22);border-radius:7px;"></div>
<div style="left:1923.5px;top:484.5px;width:28.5px;height:3px;background:#d9cba3;"></div>
<div style="left:82px;top:948px;width:1870px;height:2px;background:#ebecf0;"></div>
<span class="sb" style="left:106.59px;top:980px;font-size:26px;letter-spacing:1.132px;">Git</span>
<span class="s" style="left:197.84px;top:980px;font-size:27px;letter-spacing:1.196px;">Log</span>
<svg style="left:0px;top:0px;" width="2034" height="1486" viewBox="0 0 2034 1486"><g fill="none" stroke="#6c707e" stroke-width="2" stroke-linecap="round" stroke-linejoin="round"><path d="M281 991h24M293 979v24"/></g></svg>
<svg style="left:0px;top:0px;" width="2034" height="1486" viewBox="0 0 2034 1486"><path d="M337.0 987.5L346 996.5L355.0 987.5" fill="none" stroke="#6c707e" stroke-width="1.8" stroke-linecap="round" stroke-linejoin="round"/></svg>
<div style="left:82px;top:1032px;width:1870px;height:1.5px;background:#ebecf0;"></div>
<div style="left:174px;top:1028px;width:94px;height:6px;background:#3574f0;border-radius:3px;"></div>
<div style="left:1855.7px;top:979.7px;width:4.6px;height:4.6px;background:#6c707e;border-radius:3px;"></div>
<div style="left:1855.7px;top:989.7px;width:4.6px;height:4.6px;background:#6c707e;border-radius:3px;"></div>
<div style="left:1855.7px;top:999.7px;width:4.6px;height:4.6px;background:#6c707e;border-radius:3px;"></div>
<div style="left:1897.5px;top:991px;width:25.5px;height:2px;background:#6c707e;border-radius:1px;"></div>
<div style="left:158.3px;top:1034px;width:1.5px;height:393px;background:#e6e7eb;"></div>
<div style="left:416px;top:1034px;width:1.5px;height:393px;background:#e6e7eb;"></div>
<div style="left:1514px;top:1034px;width:1.5px;height:393px;background:#e6e7eb;"></div>
<svg style="left:0px;top:0px;" width="2034" height="1486" viewBox="0 0 2034 1486"><path d="M123.25 1062.5L115.75 1070L123.25 1077.5" fill="none" stroke="#818594" stroke-width="1.8" stroke-linecap="round" stroke-linejoin="round"/></svg>
<div style="left:100px;top:1102px;width:40px;height:2px;background:#c9ccd6;"></div>
<svg style="left:0px;top:0px;" width="2034" height="1486" viewBox="0 0 2034 1486"><g fill="none" stroke="#6c707e" stroke-width="2" stroke-linecap="round" stroke-linejoin="round"><path d="M107 1135h24M119 1123v24"/></g></svg>
<svg style="left:0px;top:0px;" width="2034" height="1486" viewBox="0 0 2034 1486"><g fill="none" stroke="#6c707e" stroke-width="2" stroke-linecap="round" stroke-linejoin="round"><path d="M129 1179.500l-17.500 17.500M111.500 1182.500v14.500h14.500"/></g></svg>
<svg style="left:0px;top:0px;" width="2034" height="1486" viewBox="0 0 2034 1486"><g fill="none" stroke="#c0c2c9" stroke-width="2" stroke-linecap="round" stroke-linejoin="round"><path d="M109 1232.500h22M115.500 1232v-2.500a3 3 0 0 1 3-3h3a3 3 0 0 1 3 3v2.500M111.500 1233v16a3.500 3.500 0 0 0 3.500 3.500h10a3.500 3.500 0 0 0 3.500-3.500v-16M116.500 1238.500v8M123.500 1238.500v8"/></g></svg>
<svg style="left:0px;top:0px;" width="2034" height="1486" viewBox="0 0 2034 1486"><g fill="none" stroke="#c0c2c9" stroke-width="2" stroke-linecap="round" stroke-linejoin="round"><path d="M135 1285.500h-16M125.500 1279l-6.500 6.500l6.500 6.500M105 1299.500h16M114.500 1293l6.500 6.500l-6.500 6.500"/></g></svg>
<svg style="left:0px;top:0px;" width="2034" height="1486" viewBox="0 0 2034 1486"><g fill="none" stroke="#c0c2c9" stroke-width="2" stroke-linecap="round" stroke-linejoin="round"><circle cx="117.5" cy="1342" r="8.5"/><path d="M123.6 1348.1L130.5 1355.0"/></g></svg>
<svg style="left:0px;top:0px;" width="2034" height="1486" viewBox="0 0 2034 1486"><path d="M115.75 1390.5L123.25 1398L115.75 1405.5" fill="none" stroke="#6c707e" stroke-width="1.8" stroke-linecap="round" stroke-linejoin="round"/></svg>
<svg style="left:0px;top:0px;" width="2034" height="1486" viewBox="0 0 2034 1486"><g fill="none" stroke="#6c707e" stroke-width="2" stroke-linecap="round" stroke-linejoin="round"><circle cx="198.5" cy="1068" r="9.5"/><path d="M205.3 1074.8L212.5 1082.0"/></g></svg>
<div style="left:160px;top:1106px;width:256px;height:1.5px;background:#ebecf0;"></div>
<span class="s" style="left:227.84px;top:1128px;font-size:27px;letter-spacing:-0.028px;">HEAD (Current</span>
<svg style="left:0px;top:0px;" width="2034" height="1486" viewBox="0 0 2034 1486"><path d="M193.0 1184.5L200 1191.5L207.0 1184.5" fill="none" stroke="#6c707e" stroke-width="1.8" stroke-linecap="round" stroke-linejoin="round"/></svg>
<span class="s" style="left:227.84px;top:1176px;font-size:27px;letter-spacing:0.694px;">Local</span>
<div style="left:184px;top:1212px;width:208px;height:48px;background:#dfe1e5;border-radius:8px;"></div>
<svg style="left:0px;top:0px;" width="2034" height="1486" viewBox="0 0 2034 1486"><path d="M279 1224.500h9.500a3 3 0 0 1 3 3v9.500a3 3 0 0 1-.9 2.100l-10.400 10.400a3 3 0 0 1-4.200 0l-9.500-9.500a3 3 0 0 1 0-4.200l10.400-10.400a3 3 0 0 1 2.100-.9z" fill="#ffaf0f"/><circle cx="285" cy="1231" r="2.600" fill="#f7f8fa"/></svg>
<span class="s" style="left:302.26px;top:1224px;font-size:27px;letter-spacing:0.438px;">main</span>
<svg style="left:0px;top:0px;" width="2034" height="1486" viewBox="0 0 2034 1486"><path d="M193.0 1280.5L200 1287.5L207.0 1280.5" fill="none" stroke="#6c707e" stroke-width="1.8" stroke-linecap="round" stroke-linejoin="round"/></svg>
<span class="s" style="left:227.84px;top:1272px;font-size:27px;letter-spacing:0.134px;">Remote</span>
<svg style="left:0px;top:0px;" width="2034" height="1486" viewBox="0 0 2034 1486"><path d="M234.0 1325.0L241.0 1332L234.0 1339.0" fill="none" stroke="#6c707e" stroke-width="1.8" stroke-linecap="round" stroke-linejoin="round"/></svg>
<svg style="left:0px;top:0px;" width="2034" height="1486" viewBox="0 0 2034 1486"><path d="M266.5 1324.5a3.5 3.5 0 0 1 3.5 -3.5h5.4l4.95 3.96H289.0a3.5 3.5 0 0 1 3.5 3.5V1339.5a3.5 3.5 0 0 1 -3.5 3.5H270.0a3.5 3.5 0 0 1 -3.5 -3.5z" fill="#ebecf0" stroke="#6c707e" stroke-width="2" stroke-linejoin="round"/></svg>
<span class="s" style="left:302.92px;top:1320px;font-size:27px;letter-spacing:0.528px;">origin</span>
<div style="left:424.2px;top:1040.4px;width:336px;height:59.4px;background:#fff;border-radius:9.5px;border:2px solid #c5c8d2;"></div>
<svg style="left:0px;top:0px;" width="2034" height="1486" viewBox="0 0 2034 1486"><g fill="none" stroke="#6c707e" stroke-width="2" stroke-linecap="round" stroke-linejoin="round"><circle cx="449" cy="1068.500" r="8.500"/><path d="M455.500 1075l7.500 7.500"/></g><path d="M463.500 1067.500h9l-4.500 5z" fill="#6c707e"/></svg>
<span class="s" style="left:489.04px;top:1058px;font-size:27px;color:#818594;letter-spacing:0.635px;">Text or hash</span>
<span class="s" style="left:667.38px;top:1058px;font-size:27px;color:#6c707e;letter-spacing:5.572px;">.*</span>
<span class="s" style="left:715.08px;top:1058px;font-size:27px;color:#6c707e;letter-spacing:1.183px;">Cc</span>
<span class="s" style="left:787.54px;top:1058px;font-size:27px;color:#818594;letter-spacing:0.441px;">Branch</span>
<svg style="left:0px;top:0px;" width="2034" height="1486" viewBox="0 0 2034 1486"><path d="M888.5 1066.75L896 1074.25L903.5 1066.75" fill="none" stroke="#818594" stroke-width="1.8" stroke-linecap="round" stroke-linejoin="round"/></svg>
<span class="s" style="left:927.87px;top:1058px;font-size:27px;color:#818594;letter-spacing:0.405px;">User</span>
<svg style="left:0px;top:0px;" width="2034" height="1486" viewBox="0 0 2034 1486"><path d="M1000.5 1066.75L1008 1074.25L1015.5 1066.75" fill="none" stroke="#818594" stroke-width="1.8" stroke-linecap="round" stroke-linejoin="round"/></svg>
<span class="s" style="left:1039.84px;top:1058px;font-size:27px;color:#818594;letter-spacing:0.556px;">Date</span>
<svg style="left:0px;top:0px;" width="2034" height="1486" viewBox="0 0 2034 1486"><path d="M1112.5 1066.75L1120 1074.25L1127.5 1066.75" fill="none" stroke="#818594" stroke-width="1.8" stroke-linecap="round" stroke-linejoin="round"/></svg>
<svg style="left:0px;top:0px;" width="2034" height="1486" viewBox="0 0 2034 1486"><path d="M1189.45 1062.5L1196.95 1070L1189.45 1077.5" fill="none" stroke="#818594" stroke-width="1.8" stroke-linecap="round" stroke-linejoin="round"/></svg>
<div style="left:1250px;top:1054px;width:32px;height:32px;background:#dfe1e5;border-radius:16px;"></div>
<svg style="left:0px;top:0px;" width="2034" height="1486" viewBox="0 0 2034 1486"><g fill="none" stroke="#818594" stroke-width="2" stroke-linecap="round" stroke-linejoin="round"><path d="M1261 1063.500c0-1.200 1.300-1.900 2.300-1.300l10.500 6.500c1 .6 1 2 0 2.600l-10.500 6.500c-1 .6-2.300-.1-2.300-1.300z"/></g></svg>
<svg style="left:0px;top:0px;" width="2034" height="1486" viewBox="0 0 2034 1486"><g fill="none" stroke="#6c707e" stroke-width="1.9" stroke-linecap="round" stroke-linejoin="round"><path d="M1324.600 1061.200a11.300 11.300 0 0 0-17.700 11.600M1302.300 1068.500l4.600 4.600l4.700-4.600M1311.400 1078.800a11.300 11.300 0 0 0 17.600-11.600M1324.300 1071.200l4.700-4.800l4.700 4.800"/></g></svg>
<svg style="left:0px;top:0px;" width="2034" height="1486" viewBox="0 0 2034 1486"><g fill="none" stroke="#6c707e" stroke-width="1.9" stroke-linecap="round" stroke-linejoin="round"><circle cx="1362.900" cy="1076" r="4.900"/><circle cx="1377" cy="1076" r="4.900"/><path d="M1377.600 1056.600c-7.600.9-12.600 5.400-14.400 14.200M1377.600 1056.600c-4.100 4.400-4.600 9.400-2 14.200"/></g></svg>
<svg style="left:0px;top:0px;" width="2034" height="1486" viewBox="0 0 2034 1486"><g fill="none" stroke="#6c707e" stroke-width="2" stroke-linecap="round" stroke-linejoin="round"><path d="M1407 1070c4-7 9.500-10 15-10s11 3 15 10c-4 7-9.500 10-15 10s-11-3-15-10z"/><circle cx="1422" cy="1070" r="5"/></g><path d="M1440 1080.5v7.500h-7.500z" fill="#6c707e"/></svg>
<svg style="left:0px;top:0px;" width="2034" height="1486" viewBox="0 0 2034 1486"><g fill="none" stroke="#6c707e" stroke-width="2" stroke-linecap="round" stroke-linejoin="round"><circle cx="1471.2" cy="1068" r="9"/><path d="M1477.7 1074.5L1484.7 1081.5"/></g></svg>
<div style="left:417.5px;top:1107.5px;width:1096.5px;height:319px;background:#edf3ff;"></div>
<div style="left:417.5px;top:1106px;width:1097px;height:1.5px;background:#ebecf0;"></div>
<div style="left:426px;top:1270px;width:1080px;height:52px;background:#d4e2ff;border-radius:8px;"></div>
<div style="left:418px;top:1107.5px;width:1096px;height:319px;overflow:hidden"><svg style="left:-418px;top:-1107.5px" width="2034" height="1486" viewBox="0 0 2034 1486"><path d="M626.5 1296.0L486.5 1348.0L521.5 1400.0L486.5 1452.0" fill="none" stroke="#8bb53c" stroke-width="2.700" stroke-linejoin="miter"/><path d="M591.5 1088.0L626.5 1140.0L626.5 1296.0" fill="none" stroke="#8bb53c" stroke-width="2.700" stroke-linejoin="miter"/><path d="M626.5 1088.0L661.5 1140.0L661.5 1296.0L521.5 1348.0L556.5 1400.0L521.5 1452.0" fill="none" stroke="#3d9fb6" stroke-width="2.700" stroke-linejoin="miter"/><path d="M556.5 1088.0L591.5 1140.0L591.5 1296.0L451.5 1348.0" fill="none" stroke="#b97f45" stroke-width="2.700" stroke-linejoin="miter"/><path d="M521.5 1088.0L556.5 1140.0L556.5 1296.0L451.5 1348.0" fill="none" stroke="#4ab648" stroke-width="2.700" stroke-linejoin="miter"/><path d="M486.5 1088.0L521.5 1140.0L521.5 1296.0L451.5 1348.0" fill="none" stroke="#4ab648" stroke-width="2.700" stroke-linejoin="miter"/><path d="M451.5 1348.0L486.5 1400.0L451.5 1452.0" fill="none" stroke="#9043b3" stroke-width="2.700" stroke-linejoin="miter"/><path d="M451.5 1088.0L486.5 1140.0L486.5 1296.0L451.5 1348.0" fill="none" stroke="#4646b6" stroke-width="2.700" stroke-linejoin="miter"/><path d="M451.5 1088.0L451.5 1452.0" fill="none" stroke="#5648b5" stroke-width="2.700" stroke-linejoin="miter"/><circle cx="486.5" cy="1140" r="8.500" fill="#4646b6"/><circle cx="521.5" cy="1192" r="8.500" fill="#4ab648"/><circle cx="556.5" cy="1244" r="8.500" fill="#4ab648"/><circle cx="591.5" cy="1296" r="8.500" fill="#b97f45"/><circle cx="451.5" cy="1348" r="8.500" fill="#5648b5"/><circle cx="486.5" cy="1400" r="8.500" fill="#9043b3"/></svg></div>
<span class="s" style="left:682.34px;top:1128px;font-size:27px;letter-spacing:0.085px;">Bump axios from 1.6.0 to 1.6.2</span>
<span class="s" style="left:1222.49px;top:1128px;font-size:27px;letter-spacing:0.282px;">20/11/2023, 12:47</span>
<svg style="left:0px;top:0px;" width="2034" height="1486" viewBox="0 0 2034 1486"><circle cx="1476.200" cy="1140" r="14" fill="#55a76a"/><path d="M1469.300 1140.5l4.900 4.900l9.200-9.800" fill="none" stroke="#fff" stroke-width="3.200" stroke-linecap="round" stroke-linejoin="round"/></svg>
<span class="s" style="left:682.34px;top:1180px;font-size:27px;letter-spacing:0.125px;">Bump puppeteer from 21.4.1 to 21.5.2</span>
<span class="s" style="left:1222.49px;top:1180px;font-size:27px;letter-spacing:0.359px;">20/11/2023, 12:46</span>
<svg style="left:0px;top:0px;" width="2034" height="1486" viewBox="0 0 2034 1486"><circle cx="1476.200" cy="1192" r="14" fill="#55a76a"/><path d="M1469.300 1192.5l4.900 4.900l9.200-9.800" fill="none" stroke="#fff" stroke-width="3.200" stroke-linecap="round" stroke-linejoin="round"/></svg>
<span class="s" style="left:682.34px;top:1232px;font-size:27px;letter-spacing:0.489px;">Bump doctrine/dbal from 3.7.0 to 3.7.2</span>
<span class="s" style="left:1222.49px;top:1232px;font-size:27px;letter-spacing:0.083px;">20/11/2023, 12:18</span>
<svg style="left:0px;top:0px;" width="2034" height="1486" viewBox="0 0 2034 1486"><circle cx="1476.200" cy="1244" r="14" fill="#55a76a"/><path d="M1469.300 1244.5l4.900 4.900l9.200-9.800" fill="none" stroke="#fff" stroke-width="3.200" stroke-linecap="round" stroke-linejoin="round"/></svg>
<span class="s" style="left:682.34px;top:1284px;font-size:27px;letter-spacing:0.450px;max-width:517.6px;overflow:hidden;">Bump laravel/framework from 10.29.0 to 10.32.1</span>
<span class="s" style="left:1222.49px;top:1284px;font-size:27px;letter-spacing:-0.030px;">20/11/2023, 12:17</span>
<svg style="left:0px;top:0px;" width="2034" height="1486" viewBox="0 0 2034 1486"><circle cx="1476.200" cy="1296" r="14" fill="#55a76a"/><path d="M1469.300 1296.5l4.900 4.900l9.200-9.800" fill="none" stroke="#fff" stroke-width="3.200" stroke-linecap="round" stroke-linejoin="round"/></svg>
<span class="s" style="left:645.44px;top:1336px;font-size:27px;color:#818594;letter-spacing:0.614px;">Merge pull request #399</span>
<span class="s" style="left:1221.79px;top:1336px;font-size:27px;color:#818594;letter-spacing:0.095px;">17/11/2023, 15:48</span>
<svg style="left:0px;top:0px;" width="2034" height="1486" viewBox="0 0 2034 1486"><circle cx="1476.200" cy="1348" r="14" fill="#55a76a"/><path d="M1469.300 1348.5l4.900 4.900l9.200-9.800" fill="none" stroke="#fff" stroke-width="3.200" stroke-linecap="round" stroke-linejoin="round"/></svg>
<span class="s" style="left:646.28px;top:1388px;font-size:27px;letter-spacing:0.150px;">Change styles on "Read more" button on RFC</span>
<span class="s" style="left:1221.79px;top:1388px;font-size:27px;letter-spacing:0.102px;">17/11/2023, 15:39</span>
<svg style="left:0px;top:0px;" width="2034" height="1486" viewBox="0 0 2034 1486"><circle cx="1476.200" cy="1400" r="14" fill="#55a76a"/><path d="M1469.300 1400.5l4.900 4.900l9.200-9.800" fill="none" stroke="#fff" stroke-width="3.200" stroke-linecap="round" stroke-linejoin="round"/></svg>
<svg style="left:0px;top:0px;" width="2034" height="1486" viewBox="0 0 2034 1486"><g fill="none" stroke="#6c707e" stroke-width="2" stroke-linecap="round" stroke-linejoin="round"><path d="M1571.500 1062.500h-15.500M1562.500 1056l-6.500 6.500l6.500 6.500M1540.500 1077h15.500M1549.500 1070.500l6.500 6.500l-6.500 6.500"/></g></svg>
<svg style="left:0px;top:0px;" width="2034" height="1486" viewBox="0 0 2034 1486"><g fill="none" stroke="#c0c2c9" stroke-width="2" stroke-linecap="round" stroke-linejoin="round"><path d="M1603 1057.500l-7 6.500l7 6.500M1596.500 1064h16.500a8 8 0 0 1 0 16h-9"/></g></svg>
<svg style="left:0px;top:0px;" width="2034" height="1486" viewBox="0 0 2034 1486"><g fill="none" stroke="#c0c2c9" stroke-width="2" stroke-linecap="round" stroke-linejoin="round"><circle cx="1660" cy="1070" r="12.500"/><path d="M1660 1062.500v7.500l5.500 3"/></g></svg>
<svg style="left:0px;top:0px;" width="2034" height="1486" viewBox="0 0 2034 1486"><g fill="none" stroke="#6c707e" stroke-width="2" stroke-linecap="round" stroke-linejoin="round"><path d="M1697 1070c4-7 9.500-10 15-10s11 3 15 10c-4 7-9.500 10-15 10s-11-3-15-10z"/><circle cx="1712" cy="1070" r="5"/></g><path d="M1730 1080.5v7.500h-7.500z" fill="#6c707e"/></svg>
<svg style="left:0px;top:0px;" width="2034" height="1486" viewBox="0 0 2034 1486"><path d="M1853.0 1064.5L1860 1057.5L1867.0 1064.5" fill="none" stroke="#6c707e" stroke-width="1.8" stroke-linecap="round" stroke-linejoin="round"/></svg>
<svg style="left:0px;top:0px;" width="2034" height="1486" viewBox="0 0 2034 1486"><path d="M1853.0 1076.0L1860 1083.0L1867.0 1076.0" fill="none" stroke="#6c707e" stroke-width="1.8" stroke-linecap="round" stroke-linejoin="round"/></svg>
<svg style="left:0px;top:0px;" width="2034" height="1486" viewBox="0 0 2034 1486"><path d="M1905.0 1058.0L1912 1065.0L1919.0 1058.0" fill="none" stroke="#6c707e" stroke-width="1.8" stroke-linecap="round" stroke-linejoin="round"/></svg>
<svg style="left:0px;top:0px;" width="2034" height="1486" viewBox="0 0 2034 1486"><path d="M1905.0 1082.0L1912 1075.0L1919.0 1082.0" fill="none" stroke="#6c707e" stroke-width="1.8" stroke-linecap="round" stroke-linejoin="round"/></svg>
<svg style="left:0px;top:0px;" width="2034" height="1486" viewBox="0 0 2034 1486"><path d="M1549.0 1136.5L1556 1143.5L1563.0 1136.5" fill="none" stroke="#6c707e" stroke-width="1.8" stroke-linecap="round" stroke-linejoin="round"/></svg>
<svg style="left:0px;top:0px;" width="2034" height="1486" viewBox="0 0 2034 1486"><path d="M1585 1133.0a3.5 3.5 0 0 1 3.5 -3.5h5.4l4.84 3.87H1607.5a3.5 3.5 0 0 1 3.5 3.5V1147.5a3.5 3.5 0 0 1 -3.5 3.5H1588.5a3.5 3.5 0 0 1 -3.5 -3.5z" fill="#ebecf0" stroke="#6c707e" stroke-width="2" stroke-linejoin="round"/></svg>
<span class="s" style="left:1620.26px;top:1128px;font-size:27px;letter-spacing:1.452px;">rfc-vote</span>
<span class="s" style="left:1731.59px;top:1128px;font-size:27px;color:#818594;letter-spacing:0.122px;">1 file</span>
<svg style="left:0px;top:0px;" width="2034" height="1486" viewBox="0 0 2034 1486"><g fill="none" stroke="#834df0" stroke-width="2.2" stroke-linecap="round" stroke-linejoin="round"><path d="M1633.500 1177.500h-1.500a3 3 0 0 0-3 3v4.500a3 3 0 0 1-3 3a3 3 0 0 1 3 3v4.500a3 3 0 0 0 3 3h1.500M1639 1177.500h1.500a3 3 0 0 1 3 3v4.500a3 3 0 0 0 3 3a3 3 0 0 0-3 3v4.500a3 3 0 0 1-3 3h-1.500"/></g></svg>
<span class="s" style="left:1658.50px;top:1176px;font-size:27px;color:#0033b3;letter-spacing:0.552px;">composer.lock</span>
<div style="left:1516px;top:1288px;width:436px;height:1.5px;background:#ebecf0;"></div>
<span class="m" style="left:1543.30px;top:1326px;font-size:27.0px;font-weight:700;letter-spacing:-0.603px;">Bump laravel/framework</span>
<span class="m" style="left:1543.30px;top:1362px;font-size:27.0px;font-weight:700;letter-spacing:-0.603px;">from 10.29.0 to 10.32.1</span>
<div style="left:0px;top:1426px;width:2034px;height:1.5px;background:#ebecf0;"></div>
<div style="left:28.8px;top:1448.5px;width:14.5px;height:14.5px;background:#e7effd;border-radius:4.5px;box-shadow:0 0 0 2px #3574f0;"></div>
<span class="s" style="left:52.46px;top:1442px;font-size:27px;color:#6c707e;letter-spacing:1.437px;">rfc-vote</span>
<span class="s" style="left:1525.44px;top:1442px;font-size:27px;color:#6c707e;letter-spacing:-0.420px;">LF</span>
<span class="s" style="left:1587.87px;top:1442px;font-size:27px;color:#6c707e;letter-spacing:0.839px;">UTF-8</span>
<span class="s" style="left:1700.83px;top:1442px;font-size:27px;color:#6c707e;letter-spacing:0.431px;">4 spaces</span>
<svg style="left:0px;top:0px;" width="2034" height="1486" viewBox="0 0 2034 1486"><g fill="none" stroke="#6c707e" stroke-width="2" stroke-linecap="round"><circle cx="1851.300" cy="1448.400" r="4"/><circle cx="1863" cy="1451.200" r="4"/><path d="M1851.300 1452.600v16"/><path d="M1863 1455.300v1.800a4.700 4.700 0 0 1-4.700 4.700h-7"/></g></svg>
<span class="s" style="left:1878.26px;top:1442px;font-size:27px;color:#6c707e;letter-spacing:0.372px;">main</span>
<svg style="left:0px;top:0px;" width="2034" height="1486" viewBox="0 0 2034 1486"><g fill="none" stroke="#6c707e" stroke-width="2" stroke-linecap="round"><rect x="1973" y="1453" width="18" height="14" rx="3.500"/><path d="M1982 1458v4M1986.500 1452.500v-2a5.500 5.500 0 0 1 11 0v3"/></g></svg>
</div></body></html>
